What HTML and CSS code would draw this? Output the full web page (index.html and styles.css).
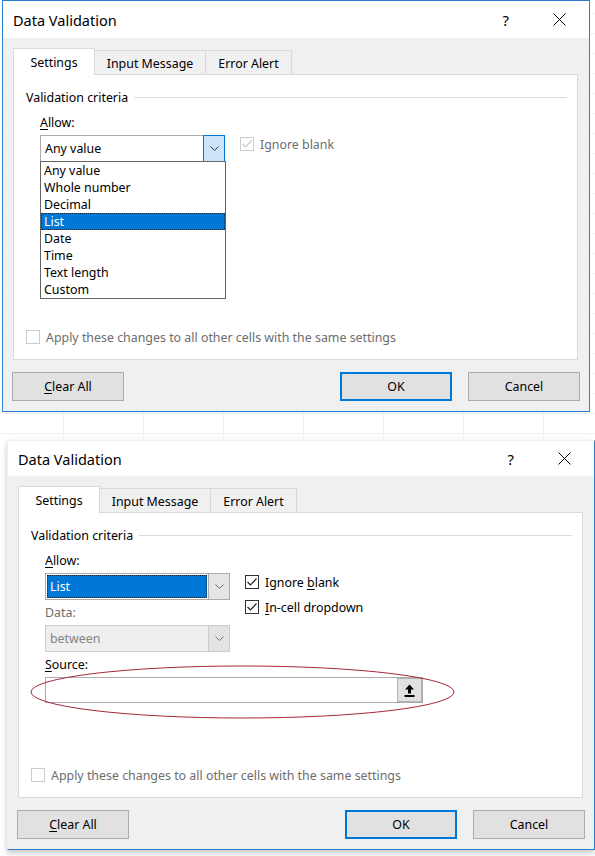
FILE: index.html
```html
<!DOCTYPE html>
<html>
<head>
<meta charset="utf-8">
<title>Data Validation</title>
<link rel="stylesheet" href="styles.css">
</head>
<body>
<div class="sheet">
  <div class="dialog dialog-a">
    <div class="titlebar">
      <span class="title">Data Validation</span>
      <span class="help">?</span>
      <svg class="close" viewBox="0 0 13 13"><path d="M0.5 0.5 L12.5 12.5 M12.5 0.5 L0.5 12.5" stroke="#000" stroke-width="1" fill="none"/></svg>
    </div>
    <div class="content">
      <div class="tabs">
        <div class="tab tab-settings active">Settings</div>
        <div class="tab tab-input">Input Message</div>
        <div class="tab tab-error">Error Alert</div>
      </div>
      <div class="panel">
        <div class="group"><span>Validation criteria</span><div class="rule"></div></div>
        <div class="fields">
          <div class="left">
            <div class="label"><u>A</u>llow:</div>
            <div class="combo">
              <div class="combo-text">Any value</div>
              <div class="combo-btn hot"><svg width="9" height="5" viewBox="0 0 9 5"><path d="M0.5 0.5 L4.5 4.5 L8.5 0.5" fill="none" stroke="#333" stroke-width="1"/></svg></div>
              <ul class="listbox">
                <li>Any value</li>
                <li>Whole number</li>
                <li>Decimal</li>
                <li class="sel">List</li>
                <li>Date</li>
                <li>Time</li>
                <li>Text length</li>
                <li>Custom</li>
              </ul>
            </div>
          </div>
          <div class="right">
            <div class="check disabled">
              <span class="box"><svg width="12" height="12" viewBox="0 0 12 12"><path d="M1.5 6 L4.5 9 L10.5 2.5" fill="none" stroke="#c4c4c4" stroke-width="1.2"/></svg></span>
              <span>Ignore blank</span>
            </div>
          </div>
        </div>
        <div class="check disabled apply">
          <span class="box"></span>
          <span>Apply these changes to all other cells with the same settings</span>
        </div>
      </div>
      <div class="buttons">
        <button class="btn"><u>C</u>lear All</button>
        <span class="grow"></span>
        <button class="btn default">OK</button>
        <button class="btn">Cancel</button>
      </div>
    </div>
  </div>
</div>

<div class="dialog dialog-b">
  <div class="titlebar">
    <span class="title">Data Validation</span>
    <span class="help">?</span>
    <svg class="close" viewBox="0 0 13 13"><path d="M0.5 0.5 L12.5 12.5 M12.5 0.5 L0.5 12.5" stroke="#000" stroke-width="1" fill="none"/></svg>
  </div>
  <div class="content">
    <div class="tabs">
      <div class="tab tab-settings active">Settings</div>
      <div class="tab tab-input">Input Message</div>
      <div class="tab tab-error">Error Alert</div>
    </div>
    <div class="panel">
      <div class="group"><span>Validation criteria</span><div class="rule"></div></div>
      <div class="fields">
        <div class="left">
          <div class="label"><u>A</u>llow:</div>
          <div class="combo">
            <div class="combo-text selected">List</div>
            <div class="combo-btn"><svg width="9" height="5" viewBox="0 0 9 5"><path d="M0.5 0.5 L4.5 4.5 L8.5 0.5" fill="none" stroke="#666" stroke-width="1"/></svg></div>
          </div>
          <div class="label muted">Data:</div>
          <div class="combo disabled">
            <div class="combo-text">between</div>
            <div class="combo-btn"><svg width="9" height="5" viewBox="0 0 9 5"><path d="M0.5 0.5 L4.5 4.5 L8.5 0.5" fill="none" stroke="#777" stroke-width="1"/></svg></div>
          </div>
        </div>
        <div class="right">
          <div class="check">
            <span class="box"><svg width="12" height="12" viewBox="0 0 12 12"><path d="M1.5 6 L4.5 9 L10.5 2.5" fill="none" stroke="#222" stroke-width="1.2"/></svg></span>
            <span>Ignore <u>b</u>lank</span>
          </div>
          <div class="check">
            <span class="box"><svg width="12" height="12" viewBox="0 0 12 12"><path d="M1.5 6 L4.5 9 L10.5 2.5" fill="none" stroke="#222" stroke-width="1.2"/></svg></span>
            <span><u>I</u>n-cell dropdown</span>
          </div>
        </div>
      </div>
      <div class="source">
        <div class="label"><u>S</u>ource:</div>
        <div class="source-input">
          <div class="source-text"></div>
          <div class="ref-btn"><svg width="11" height="13" viewBox="0 0 11 13"><path d="M5.5 0.5 L10 5.5 L7 5.5 L7 9.5 L4 9.5 L4 5.5 L1 5.5 Z" fill="#000"/><rect x="0.5" y="11" width="10" height="2" fill="#000"/></svg></div>
          <svg class="ellipse" width="425" height="55" viewBox="0 0 425 55"><ellipse cx="212.5" cy="27" rx="211.5" ry="26" fill="none" stroke="#a82838" stroke-width="1"/></svg>
        </div>
      </div>
      <div class="check disabled apply">
        <span class="box"></span>
        <span>Apply these changes to all other cells with the same settings</span>
      </div>
    </div>
    <div class="buttons">
      <button class="btn"><u>C</u>lear All</button>
      <span class="grow"></span>
      <button class="btn default">OK</button>
      <button class="btn">Cancel</button>
    </div>
  </div>
</div>
</body>
</html>
```
FILE: styles.css
```css
* { box-sizing: border-box; }
html, body { margin: 0; padding: 0; }
body {
  width: 595px;
  height: 856px;
  overflow: hidden;
  background: #fff;
  font-family: "Noto Sans", "Open Sans", sans-serif;
  font-size: 12.4px;
  color: #000;
}
u { text-decoration: underline; text-underline-offset: 2px; }

.sheet {
  padding-bottom: 28px;
  background-color: #fff;
  background-image:
    linear-gradient(#f1f1f1 1px, transparent 1px),
    linear-gradient(90deg, #f1f1f1 1px, transparent 1px);
  background-size: 80px 20px;
  background-position: 63px 13px;
}

.dialog {
  width: 588px;
  border: 1px solid #2b7bd0;
  background: #f0f0f0;
  display: flex;
  flex-direction: column;
}
.dialog-a { margin-left: 2px; }
.dialog-b {
  margin-left: 7px;
  border-left-color: transparent;
  border-top-color: transparent;
  box-shadow: 0 3px 6px rgba(0, 0, 0, 0.22);
}

.titlebar {
  height: 37px;
  background: #fff;
  display: flex;
  align-items: center;
  padding-left: 10px;
}
.dialog-b .titlebar { height: 35px; }
.title { flex: 1; font-size: 14.5px; }
.help { font-size: 15px; margin-right: 44px; }
.close { width: 13px; height: 13px; margin-right: 23px; }

.content {
  padding: 10px 11px 10px 10px;
}

.tabs {
  display: flex;
  align-items: flex-end;
  height: 27px;
  margin-bottom: -1px;
  position: relative;
  z-index: 1;
}
.tab {
  height: 24px;
  margin-bottom: 1px;
  border-top: 1px solid #d9d9d9;
  border-right: 1px solid #d9d9d9;
  background: #f0f0f0;
  display: flex;
  align-items: center;
  justify-content: center;
  padding-top: 1px;
}
.tab.active {
  height: 27px;
  margin-bottom: 0;
  border-left: 1px solid #d9d9d9;
  background: #fff;
}
.tab-settings { width: 82px; }
.tab-input { width: 111px; }
.tab-error { width: 86px; }

.panel {
  height: 286px;
  background: #fff;
  border: 1px solid #d9d9d9;
  padding: 14px 10px 14px 12px;
  display: flex;
  flex-direction: column;
}

.group {
  display: flex;
  align-items: center;
  height: 16px;
  gap: 6px;
}
.rule { flex: 1; height: 1px; background: #dcdcdc; }

.fields {
  display: flex;
  margin-top: 10px;
  padding-left: 14px;
}
.left { width: 185px; display: flex; flex-direction: column; }
.right {
  margin-left: 15px;
  padding-top: 21px;
  display: flex;
  flex-direction: column;
  gap: 9px;
}

.label { height: 16px; line-height: 16px; margin-bottom: 4px; }
.label.muted { color: #6d6d6d; }

.combo {
  position: relative;
  height: 27px;
  margin-bottom: 5px;
  border: 1px solid #acacac;
  background: #fff;
  display: flex;
}
.combo-text {
  flex: 1;
  display: flex;
  align-items: center;
  padding-left: 4px;
}
.combo-text.selected {
  margin: 1px;
  padding-left: 2px;
  background: #0078d7;
  color: #fff;
  border: 1px dotted #0a2a4a;
}
.combo-btn {
  width: 21px;
  border-left: 1px solid #acacac;
  background: #e5e5e5;
  display: flex;
  align-items: center;
  justify-content: center;
}
.combo-btn.hot {
  width: 22px;
  margin: -1px -1px -1px 0;
  border: 1px solid #0078d7;
  background: #cce4f7;
}
.combo.disabled { background: #efefef; border-color: #cccccc; color: #838383; }
.combo.disabled .combo-btn { background: #e3e3e3; border-left-color: #cccccc; }

.listbox {
  position: absolute;
  left: -1px;
  top: 25px;
  width: 186px;
  margin: 0;
  padding: 0;
  list-style: none;
  background: #fff;
  border: 1px solid #646464;
  z-index: 5;
}
.listbox li {
  height: 17px;
  line-height: 15px;
  padding-left: 2px;
  border: 1px solid transparent;
}
.listbox li.sel {
  background: #0078d7;
  color: #fff;
  border: 1px dotted #0a2a4a;
}

.check {
  display: flex;
  align-items: center;
  gap: 6px;
  height: 16px;
}
.box {
  width: 14px;
  height: 14px;
  border: 1px solid #333;
  background: #fff;
  display: flex;
  align-items: center;
  justify-content: center;
}
.check.disabled { color: #6d6d6d; }
.check.disabled .box { border-color: #cccccc; }
.apply { margin-top: auto; }

.source { padding-left: 14px; }
.source-input {
  position: relative;
  width: 378px;
  height: 26px;
  border: 1px solid #acacac;
  background: #fff;
  display: flex;
  justify-content: flex-end;
}
.ref-btn {
  width: 25px;
  background: #e1e1e1;
  border: 1px solid #b4b4b4;
  display: flex;
  align-items: center;
  justify-content: center;
}
.ellipse {
  position: absolute;
  left: -16px;
  top: -13px;
  pointer-events: none;
}

.buttons {
  display: flex;
  margin: 12px -2px 0 -1px;
}
.grow { flex: 1; }
.btn {
  width: 112px;
  height: 29px;
  margin: 0;
  padding: 0;
  background: #e1e1e1;
  border: 1px solid #adadad;
  font-family: inherit;
  font-size: 12.4px;
  color: #000;
}
.btn.default { border: 2px solid #0078d7; margin-right: 16px; }
```
